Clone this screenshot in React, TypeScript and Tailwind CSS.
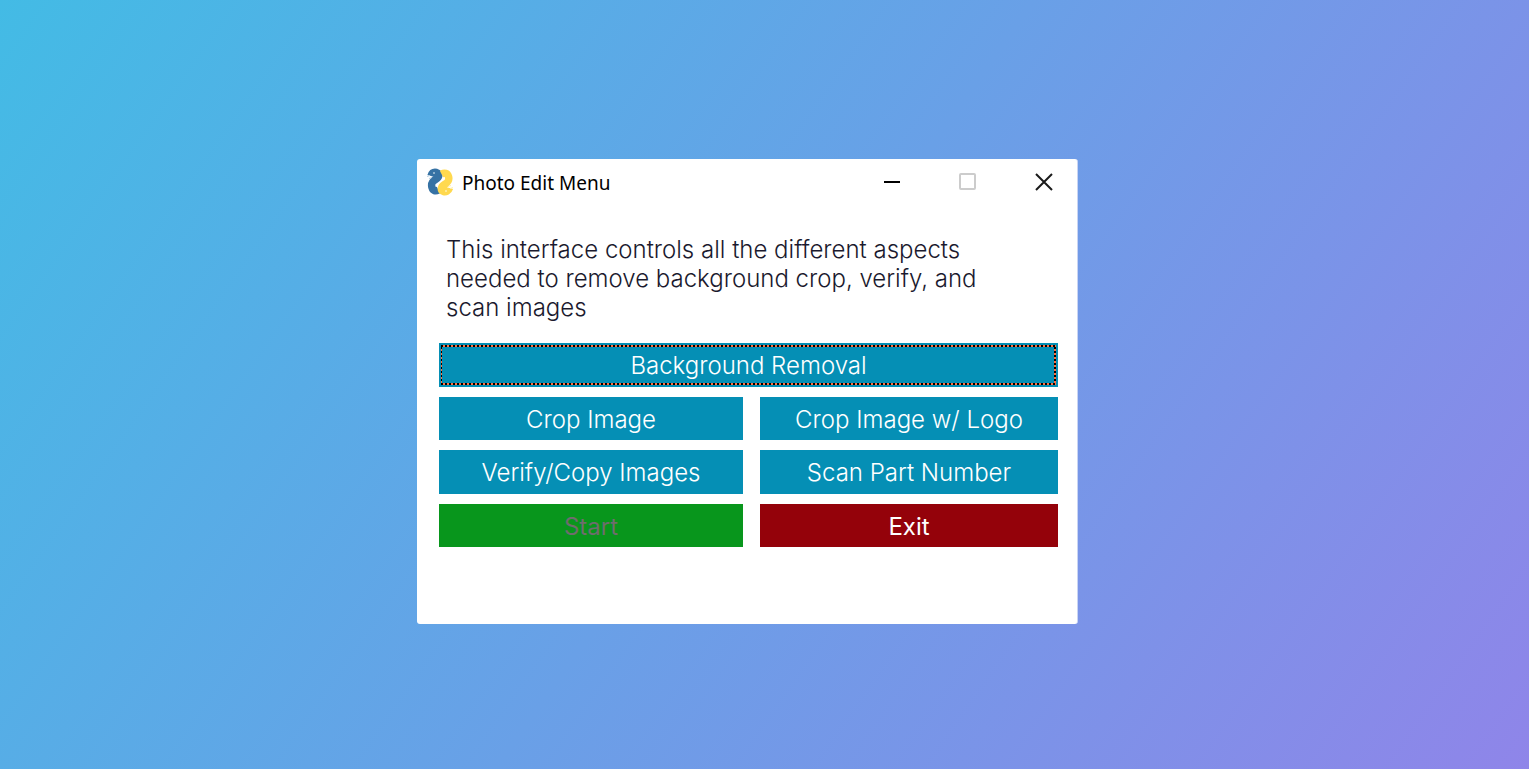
import React from "react";

const blue = "bg-[#058fb5] text-white";

function PythonLogo() {
  return (
    <svg viewBox="0 0 28 28" className="size-7" fill="none" aria-hidden="true">
      <path d="M5 8C6 4.800 8 4 10.500 4.500C14 5.500 13.500 9 9.500 11.500C5.500 14 5 16 6 19.500C7 23 9.500 23.500 12.500 22" stroke="#3672a4" strokeWidth="7.500" strokeLinejoin="round" />
      <path d="M15.500 6C18.500 4.500 21.500 5 22.500 8.500C23.500 12 22.500 14 18.500 16.500C14.500 19 14.500 22.500 17.500 23.500C20 24 22.500 23.200 23.500 20" stroke="#ffd94f" strokeWidth="7.500" strokeLinejoin="round" />
      <path d="M1 8.500L4 7.500M3 10.500L6 9.500" stroke="#b9cfe0" strokeWidth="1" />
      <path d="M27 19.500L24 20.500M25 17.500L22 18.500" stroke="#fff0ad" strokeWidth="1" />
      <circle cx="8" cy="5" r="1" fill="#a9c4da" />
      <circle cx="20" cy="23" r="1" fill="#fff0ad" />
    </svg>
  );
}

function FocusRing() {
  return (
    <span aria-hidden="true" className="pointer-events-none absolute inset-0.5 flex flex-col">
      <span className="h-0.5 bg-[repeating-linear-gradient(90deg,#000_0_2px,#ff7043_2px_4px)]" />
      <span className="flex flex-1 justify-between">
        <span className="w-px bg-[repeating-linear-gradient(180deg,#000_0_2px,#ff7043_2px_4px)]" />
        <span className="w-0.5 bg-[repeating-linear-gradient(180deg,#000_0_2px,#ff7043_2px_4px)]" />
      </span>
      <span className="h-0.5 bg-[repeating-linear-gradient(90deg,#000_0_2px,#ff7043_2px_4px)]" />
    </span>
  );
}

type MenuButtonProps = { label: string; className: string; disabled?: boolean; focused?: boolean };

function MenuButton({ label, className, disabled, focused }: MenuButtonProps) {
  return (
    <button type="button" disabled={disabled} className={`relative flex items-center justify-center pt-0.5 ${className}`}>
      {label}
      {focused && <FocusRing />}
    </button>
  );
}

export default function App() {
  return (
    <main className="flex min-h-screen items-center justify-center border-b border-white bg-[linear-gradient(125deg,#43bbe5,#8f85e9)] pt-3.5 pr-[34px]">
      <section className="w-full max-w-[661px] rounded-[3px] border-r border-[#c9d4f3] bg-white pb-[77px]">
        <header className="flex h-[46px] items-center justify-between pl-[9px] pr-6">
          <div className="flex items-center gap-2">
            <PythonLogo />
            <h1 className="pt-0.5 font-['Noto_Sans',sans-serif] text-[19px] leading-6 text-black">Photo Edit Menu</h1>
          </div>
          <div className="flex items-center gap-[58px]">
            <button type="button" aria-label="Minimize">
              <svg className="size-[18px]" viewBox="0 0 18 18" shapeRendering="crispEdges"><path d="M1 9H17" stroke="#000" strokeWidth="2" /></svg>
            </button>
            <button type="button" aria-label="Maximize" disabled>
              <svg className="size-[18px]" viewBox="0 0 18 18"><rect x="1" y="1" width="15" height="15" rx="1" fill="none" stroke="#ccc" strokeWidth="2" /></svg>
            </button>
            <button type="button" aria-label="Close">
              <svg className="size-[18px]" viewBox="0 0 18 18"><path d="M1 1L17 17M17 1L1 17" stroke="#1a1a1a" strokeWidth="2" /></svg>
            </button>
          </div>
        </header>
        <p className="mx-[29px] mt-[30px] font-[Inter,sans-serif] text-2xl leading-[29px] font-light text-[#1b1a2e]">
          This interface controls all the different aspects
          <br />
          needed to remove background crop, verify, and
          <br />
          scan images
        </p>
        <div className="mt-[21px] mr-[19px] ml-[22px] grid grid-cols-[304fr_298fr] grid-rows-[44px_43px_44px_43px] gap-x-[17px] gap-y-2.5 font-[Inter,sans-serif] text-2xl font-light">
          <MenuButton label="Background Removal" className={`col-span-2 ${blue}`} focused />
          <MenuButton label="Crop Image" className={blue} />
          <MenuButton label="Crop Image w/ Logo" className={blue} />
          <MenuButton label="Verify/Copy Images" className={blue} />
          <MenuButton label="Scan Part Number" className={blue} />
          <MenuButton label="Start" className="bg-[#08961c] font-normal text-[#6d6d6d]" disabled />
          <MenuButton label="Exit" className="bg-[#94020a] font-normal text-white" />
        </div>
      </section>
    </main>
  );
}
